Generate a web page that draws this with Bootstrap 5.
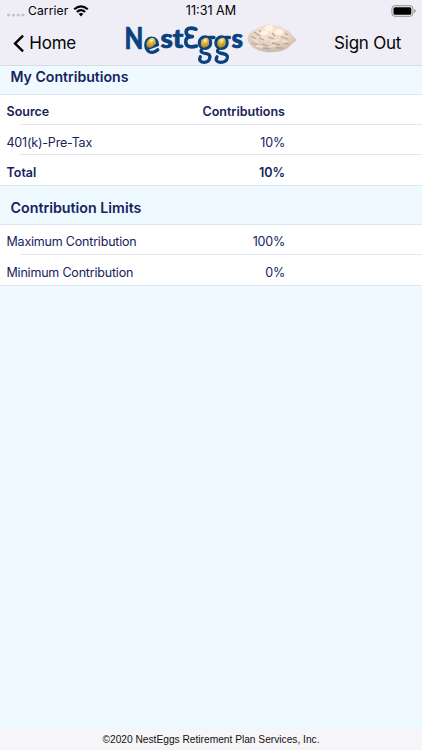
<!DOCTYPE html>
<html lang="en">
<head>
<meta charset="utf-8">
<meta name="viewport" content="width=device-width, initial-scale=1">
<title>My Contributions</title>
<link href="https://cdn.jsdelivr.net/npm/bootstrap@5.3.0/dist/css/bootstrap.min.css" rel="stylesheet">
<style>
body{font-family:Inter,"Liberation Sans",sans-serif;background:#eefaff;color:#17225d;height:750px;overflow:hidden}
.top-area{background:#efeef6;height:66px;border-bottom:1px solid #d9dce5;color:#000}
.status-row{height:20px;font-size:12.1px;line-height:21px;display:grid;grid-template-columns:1fr auto 1fr;padding:0 6px 0 7px}
.carrier-name{margin-left:3px;letter-spacing:.1px}
.clock{font-size:12.6px;margin-left:-1px}
.wifi{margin-left:5px}
.nav-row{height:45px;font-size:17px;line-height:47px;padding-left:12px;padding-right:21px;letter-spacing:-.25px;grid-template-columns:64px 1fr auto}
.nav-row a{color:#050505}
.home-text{margin-left:5px}
.chevron{margin-left:1px}
.brand-art{width:186px;height:45px;margin-left:44px;overflow:visible}
.section-title{font-size:14.1px;font-weight:600;line-height:20px;padding-left:10.5px;border-bottom:1px solid #dfe6ef}
.first-title{height:29px;padding-top:1px}
.second-title{height:39px;padding-top:11.5px;font-size:14.25px}
.data-row{height:30px;padding-left:6.5px;font-size:12.5px;line-height:33px;position:relative;letter-spacing:-.2px}
.data-row.fw-semibold{letter-spacing:0}
.data-row+.data-row{line-height:35px}
.data-row+.data-row::before{content:"";position:absolute;left:20px;right:0;top:-1px;height:1px;background:#e4e5ed}
.data-row .amount{width:125px;margin-right:137px;text-align:right}
.data-group{background:#fff;height:91px;border-bottom:1px solid #dfe6ef}
.limits-group{height:61px}
.foot{height:22px;background:#f6f6f8;color:#111;font:10.2px/23px "Liberation Sans",sans-serif}
</style>
<script src="https://cdn.jsdelivr.net/npm/bootstrap@5.3.0/dist/js/bootstrap.bundle.min.js"></script>
</head>
<body class="d-flex flex-column m-0">
<header class="top-area flex-shrink-0">
  <div class="status-row">
    <div class="d-flex align-items-center">
      <svg width="18" height="20" fill="#c3c2ca"><circle cx="1.6" cy="14" r="1.6"/><circle cx="6.5" cy="14" r="1.6"/><circle cx="11.2" cy="14" r="1.6"/><circle cx="15.8" cy="14" r="1.6"/></svg>
      <span class="carrier-name">Carrier</span>
      <svg class="wifi" width="16" height="12" viewBox="0 0 16 12"><path d="M1.2 4.2Q8-1.6 14.8 4.2M3.8 7Q8 3.4 12.2 7" fill="none" stroke="#000" stroke-width="2.1"/><path d="M5.6 8.8Q8 7 10.4 8.8L8 11.4Z"/></svg>
    </div>
    <div class="clock">11:31 AM</div>
    <div class="d-flex justify-content-end align-items-center">
      <svg width="25" height="12" viewBox="0 0 25 12"><rect x=".9" y=".7" width="21" height="10.6" rx="3" fill="none" stroke="#8f8f94"/><rect x="2.5" y="2.2" width="17.8" height="7.6" rx="1.6"/><path d="M23.2 4q1.5.5 1.5 2t-1.5 2z" fill="#8f8f94"/></svg>
    </div>
  </div>
  <nav class="nav-row d-grid align-items-center">
    <a href="#" class="d-flex align-items-center text-decoration-none"><svg class="chevron" width="14" height="23" viewBox="0 0 14 23"><path d="M12.4 1.9L2.6 11.5L12.4 21.1" fill="none" stroke="#000" stroke-width="3"/></svg><span class="home-text">Home</span></a>
    <svg class="brand-art" viewBox="119 20 186 45" role="img" aria-label="NestEggs">
      <defs>
        <radialGradient id="yolk" cx=".38" cy=".3" r=".75"><stop stop-color="#fff6c4"/><stop offset=".4" stop-color="#e0b840"/><stop offset="1" stop-color="#b0810f"/></radialGradient>
        <radialGradient id="straw" cx=".45" cy=".25" r=".75"><stop stop-color="#f8e8da"/><stop offset=".55" stop-color="#e6d3c3"/><stop offset="1" stop-color="#c9bbb0"/></radialGradient>
        <filter id="nestSoft" x="-10%" y="-10%" width="120%" height="120%"><feGaussianBlur stdDeviation=".7"/></filter>
      </defs>
      <g font-family="Lato, sans-serif" font-weight="900" fill="#0a427f" stroke="#0a427f" stroke-width=".7">
        <text x="123.6" y="47.5" font-size="30" textLength="18.6" lengthAdjust="spacingAndGlyphs">N</text>
        <text x="159.5" y="47.2" font-size="26" textLength="22.5" lengthAdjust="spacingAndGlyphs">st</text>
        <text x="230.5" y="47.2" font-size="26">s</text>
      </g>
      <g fill="none" stroke="#0a427f" stroke-width="3.3" stroke-linecap="round" stroke-linejoin="round">
        <path d="M148.5 46.8L156.5 43.8C156.5 39.5 154 37.2 150.5 37.2C146.5 37.2 144.6 40.5 144.8 44.5C145 49.5 148 51.6 151.5 51.3Q154.5 51 156.8 48.8"/>
        <path stroke-width="3.6" d="M195 28.2C189 26 184.8 27.5 185.2 31.5Q185.6 35.6 191.5 35.6C185.5 35.6 184.5 38 184.8 41.3C185.2 46 190 46.7 195.5 45"/>
        <ellipse cx="204" cy="41.7" rx="5.6" ry="5.7"/>
        <path d="M208 36.5H213M201 48Q198.3 51 202.5 52C207 52.8 209.5 53.5 208.8 57C208 60.8 205.8 61.3 203 61.3C199 61.3 197.7 58.8 199.3 55.8"/>
        <ellipse cx="220.5" cy="41.7" rx="5.6" ry="5.7"/>
        <path d="M224.5 36.5H228.5M217.5 48Q214.8 51 219 52C224 52.8 226.8 53.5 226.3 57C225.5 60.8 222.5 61.3 219.7 61.3C215.5 61.3 214.2 58.8 216 55.8"/>
      </g>
      <g fill="url(#yolk)"><ellipse cx="150" cy="41.8" rx="4" ry="5.4" transform="rotate(38 150 41.8)"/><ellipse cx="204" cy="41.7" rx="3.9" ry="5.2" transform="rotate(28 204 41.7)"/><ellipse cx="220.5" cy="41.7" rx="3.9" ry="5.2" transform="rotate(28 220.5 41.7)"/></g>
      <g filter="url(#nestSoft)">
        <path d="M246.5 38Q246.5 31 255 28L261 25L267 23L273 24.5L279 25L283 28L288 30L291 34L296 39L291 43L287 47Q279 52 266 51.2Q249 49 246.5 38Z" fill="url(#straw)"/>
        <g fill="#fff3e4"><ellipse cx="268" cy="27" rx="4.3" ry="3"/><ellipse cx="278" cy="31" rx="4.5" ry="3"/><ellipse cx="263" cy="32" rx="3.8" ry="2.2"/></g>
        <path d="M250 35L255 38M253 31L259 35M258 37L263 39M267 36L273 38M280 36L287 38M251 42L257 44M261 43L267 45M271 42L279 44M283 42L288 43M262 47L269 48M275 47L282 47M271 32L274 35M258 29L260 31M284 32L287 34" fill="none" stroke="#c0a58d" stroke-width="1.3"/>
        <path d="M252 38L257 41M261 36L267 39M270 40L278 39M281 40L286 41M255 45L262 46M269 46L275 44" fill="none" stroke="#f6e6d7" stroke-width="1.3"/>
      </g>
    </svg>
    <a href="#" class="text-decoration-none text-nowrap">Sign Out</a>
  </nav>
</header>
<main class="flex-grow-1">
  <h2 class="section-title first-title m-0">My Contributions</h2>
  <section class="data-group">
    <div class="data-row d-flex justify-content-between fw-semibold"><span>Source</span><span class="amount">Contributions</span></div>
    <div class="data-row d-flex justify-content-between"><span>401(k)-Pre-Tax</span><span class="amount">10%</span></div>
    <div class="data-row d-flex justify-content-between fw-semibold"><span>Total</span><span class="amount">10%</span></div>
  </section>
  <h2 class="section-title second-title m-0">Contribution Limits</h2>
  <section class="data-group limits-group">
    <div class="data-row d-flex justify-content-between"><span>Maximum Contribution</span><span class="amount">100%</span></div>
    <div class="data-row d-flex justify-content-between"><span>Minimum Contribution</span><span class="amount">0%</span></div>
  </section>
</main>
<footer class="foot flex-shrink-0 text-center">©2020 NestEggs Retirement Plan Services, Inc.</footer>
</body>
</html>
